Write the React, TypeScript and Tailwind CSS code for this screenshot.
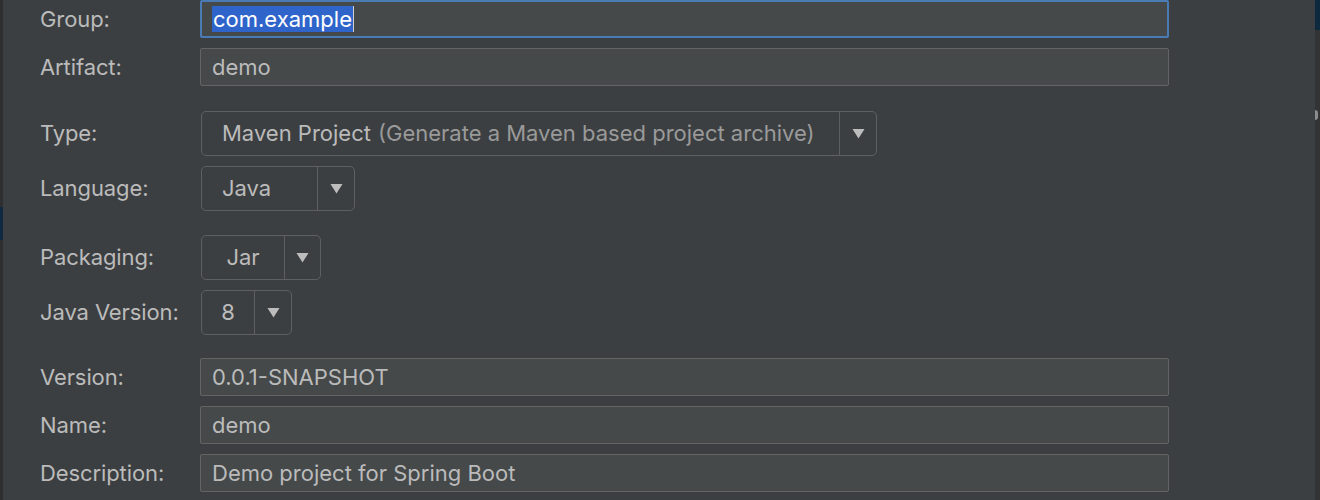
import React from "react";

const font = { fontFamily: "Inter, 'Noto Sans', sans-serif" };

function Label({ children }: { children: React.ReactNode }) {
  return (
    <div className="w-[157px] shrink-0 whitespace-nowrap pl-[37px] text-[22px] tracking-[-0.1px] text-[#bbbbbb]">
      {children}
    </div>
  );
}

function TextField({ value, focused }: { value: string; focused?: boolean }) {
  return (
    <div
      className={`flex h-[38px] w-[969px] items-center rounded-[2px] bg-[#45494a] text-[22px] text-[#bbbbbb] ${
        focused ? "border-2 border-[#4a7bb5] pl-[10px]" : "border border-[#646464] pl-[11px]"
      }`}
    >
      {focused ? (
        <span className="flex items-center">
          <span className="bg-[#2f65ca] px-[1px] leading-[26px] text-white">{value}</span>
          <span className="h-[26px] w-[1px] bg-[#cfcfcf]" />
        </span>
      ) : (
        value
      )}
    </div>
  );
}

function Select({ value, hint, width, textWidth }: { value: string; hint?: string; width: string; textWidth: string }) {
  return (
    <div className={`flex h-[45px] ${width} items-stretch rounded-[5px] border border-[#5e6060] text-[22px]`}>
      <div className={`flex ${textWidth} items-center whitespace-nowrap border-r border-[#5e6060] px-[20px]`}>
        <span className="text-[#bbbbbb]">{value}</span>
        {hint && <span className="ml-[7px] text-[#9a9a9a]">{hint}</span>}
      </div>
      <div className="flex flex-1 items-center justify-center">
        <svg width="13" height="11" viewBox="0 0 13 11">
          <path d="M0.5 1 L12.5 1 L6.5 10.5 Z" fill="#bdbdbd" />
        </svg>
      </div>
    </div>
  );
}

function Row({ label, top, children }: { label: string; top: string; children: React.ReactNode }) {
  return (
    <div className={`flex items-center ${top}`}>
      <Label>{label}</Label>
      <div className="pl-[40px]">{children}</div>
    </div>
  );
}

export default function App() {
  return (
    <div className="flex h-[500px] w-[1320px] overflow-hidden bg-[#3c3f41]" style={font}>
      <div className="flex w-[3px] shrink-0 flex-col bg-[#2e2f30]">
        <div className="mt-[207px] h-[33px] bg-[#0f2a40]" />
      </div>
      <div className="flex flex-1 flex-col">
        <Row label="Group:" top="mt-0">
          <TextField value="com.example" focused />
        </Row>
        <Row label="Artifact:" top="mt-[10px]">
          <TextField value="demo" />
        </Row>
        <Row label="Type:" top="mt-[25px]">
          <div className="pl-[1px]">
            <Select
              value="Maven Project"
              hint="(Generate a Maven based project archive)"
              width="w-[676px]"
              textWidth="w-[638px] justify-start"
            />
          </div>
        </Row>
        <Row label="Language:" top="mt-[10px]">
          <div className="pl-[1px]">
            <Select value="Java" width="w-[154px]" textWidth="w-[116px] justify-start" />
          </div>
        </Row>
        <Row label="Packaging:" top="mt-[24px]">
          <div className="pl-[1px]">
            <Select value="Jar" width="w-[120px]" textWidth="w-[83px] justify-center" />
          </div>
        </Row>
        <Row label="Java Version:" top="mt-[10px]">
          <div className="pl-[1px]">
            <Select value="8" width="w-[91px]" textWidth="w-[53px] justify-center" />
          </div>
        </Row>
        <Row label="Version:" top="mt-[23px]">
          <TextField value="0.0.1-SNAPSHOT" />
        </Row>
        <Row label="Name:" top="mt-[10px]">
          <TextField value="demo" />
        </Row>
        <Row label="Description:" top="mt-[10px]">
          <TextField value="Demo project for Spring Boot" />
        </Row>
      </div>
      <div className="flex w-[5px] shrink-0 flex-col bg-[#313335]">
        <div className="h-[30px] bg-[#0d293e]" />
        <div className="mt-[80px] h-[10px] w-[3px] rounded-r-full bg-[#8a8c8e]" />
      </div>
    </div>
  );
}
